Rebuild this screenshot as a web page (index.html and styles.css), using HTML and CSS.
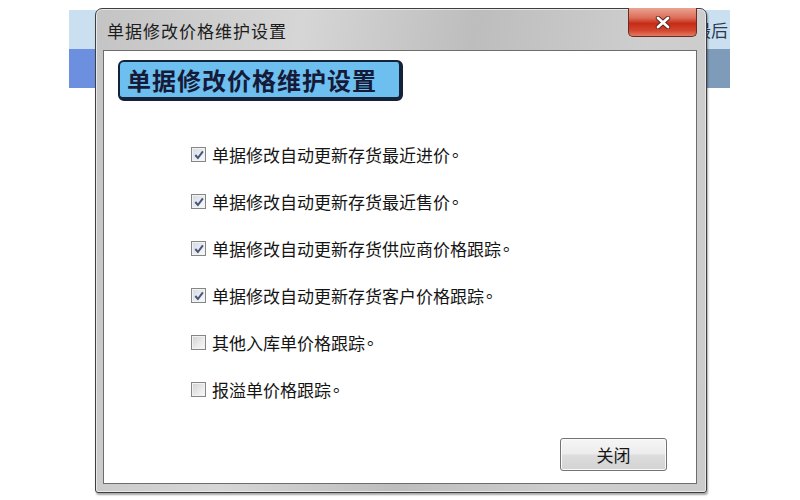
FILE: index.html
```html
<!DOCTYPE html>
<html lang="zh-CN">
<head>
<meta charset="utf-8">
<title>单据修改价格维护设置</title>
<link rel="stylesheet" href="styles.css">
</head>
<body>
<div class="desktop">
  <div class="appbar">
    <div class="app-top"><span class="app-text">最后</span></div>
    <div class="app-bottom"><div class="app-left"></div><div class="app-right"></div></div>
  </div>

  <div class="dialog">
    <div class="titlebar">单据修改价格维护设置</div>
    <div class="close-x">
      <svg width="16" height="13" viewBox="0 0 16 13">
        <path d="M3 2 L13 11 M13 2 L3 11" stroke="#5a2018" stroke-width="4.4" stroke-linecap="round"/>
        <path d="M3 2 L13 11 M13 2 L3 11" stroke="#ffffff" stroke-width="2.8" stroke-linecap="round"/>
      </svg>
    </div>
    <div class="client">
      <div class="banner">单据修改价格维护设置</div>
      <div class="options">
        <label class="opt"><span class="cb on"><svg width="12" height="12" viewBox="0 0 12 12"><path d="M2.3 6 L4.9 9 L9.9 2.3" fill="none" stroke="#46577a" stroke-width="2"/></svg></span><span class="opt-text">单据修改自动更新存货最近进价<span class="stop">。</span></span></label>
        <label class="opt"><span class="cb on"><svg width="12" height="12" viewBox="0 0 12 12"><path d="M2.3 6 L4.9 9 L9.9 2.3" fill="none" stroke="#46577a" stroke-width="2"/></svg></span><span class="opt-text">单据修改自动更新存货最近售价<span class="stop">。</span></span></label>
        <label class="opt"><span class="cb on"><svg width="12" height="12" viewBox="0 0 12 12"><path d="M2.3 6 L4.9 9 L9.9 2.3" fill="none" stroke="#46577a" stroke-width="2"/></svg></span><span class="opt-text">单据修改自动更新存货供应商价格跟踪<span class="stop">。</span></span></label>
        <label class="opt"><span class="cb on"><svg width="12" height="12" viewBox="0 0 12 12"><path d="M2.3 6 L4.9 9 L9.9 2.3" fill="none" stroke="#46577a" stroke-width="2"/></svg></span><span class="opt-text">单据修改自动更新存货客户价格跟踪<span class="stop">。</span></span></label>
        <label class="opt"><span class="cb"></span><span class="opt-text">其他入库单价格跟踪<span class="stop">。</span></span></label>
        <label class="opt"><span class="cb"></span><span class="opt-text">报溢单价格跟踪<span class="stop">。</span></span></label>
      </div>
      <div class="footer">
        <button class="btn">关闭</button>
      </div>
    </div>
  </div>
</div>
</body>
</html>
```

FILE: styles.css
```css
html, body {
  margin: 0;
  padding: 0;
  background: #ffffff;
}

body {
  width: 800px;
  height: 500px;
  overflow: hidden;
  font-family: "Noto Sans CJK SC", "Noto Sans", sans-serif;
}

.desktop {
  position: relative;
  width: 800px;
  height: 500px;
  background: #ffffff;
}

/* application window behind the dialog */
.appbar {
  position: absolute;
  left: 69px;
  top: 10px;
  width: 661px;
  height: 78px;
  display: flex;
  flex-direction: column;
}

.app-top {
  height: 39px;
  background: #cadff0;
  display: flex;
  justify-content: flex-end;
  align-items: center;
  overflow: hidden;
}

.app-text {
  font-size: 17px;
  color: #2c3a4e;
  margin-right: 2px;
}

.app-bottom {
  flex: 1;
  display: flex;
}

.app-left {
  flex: 1;
  background: #6d8fe0;
}

.app-right {
  flex: 1;
  background: #7e9cba;
}

/* dialog window */
.dialog {
  position: absolute;
  left: 95px;
  top: 8px;
  width: 610px;
  height: 483px;
  border: 1px solid #3e3e3e;
  border-radius: 7px 7px 3px 3px;
  background: linear-gradient(100deg, #c4c4c4 0%, #d6d6d6 30%, #bdbdbd 55%, #cecece 80%, #cbcbcb 100%);
  box-shadow: 1px 2px 2px rgba(0, 0, 0, 0.35), inset 0 0 0 1px #e8e8e8;
  display: flex;
  flex-direction: column;
}

.titlebar {
  height: 41px;
  display: flex;
  align-items: center;
  padding-left: 11px;
  font-size: 17px;
  letter-spacing: 1px;
  color: #1c1c1c;
  box-sizing: border-box;
  padding-top: 1px;
}

.close-x {
  position: absolute;
  top: -1px;
  right: 9px;
  width: 69px;
  height: 29px;
  box-sizing: border-box;
  border: 1px solid #6b2a22;
  border-top: none;
  border-radius: 0 0 5px 5px;
  background: linear-gradient(180deg, #eba392 0%, #dc6e5a 35%, #c62c18 55%, #d2452e 80%, #e47a64 100%);
  display: flex;
  align-items: center;
  justify-content: center;
}

.client {
  flex: 1;
  margin: 0 9px 8px 7px;
  border: 1px solid #6d6d6d;
  background: #ffffff;
  display: flex;
  flex-direction: column;
}

.banner {
  margin: 9px 0 0 14px;
  width: 285px;
  height: 41px;
  box-sizing: border-box;
  border: 2px solid #14233a;
  border-right-width: 4px;
  border-bottom-width: 4px;
  border-radius: 6px;
  background: #6dbff0;
  color: #151a38;
  font-size: 24px;
  font-weight: bold;
  letter-spacing: 1px;
  padding-left: 7px;
  display: flex;
  align-items: center;
  white-space: nowrap;
}

.options {
  margin-top: 30px;
  padding-left: 87px;
  display: flex;
  flex-direction: column;
}

.opt {
  height: 47px;
  display: flex;
  align-items: center;
}

.cb {
  width: 15px;
  height: 15px;
  box-sizing: border-box;
  border: 1px solid #868686;
  background: linear-gradient(135deg, #d0d0d0 0%, #ebebeb 60%, #f8f8f8 100%);
  box-shadow: inset 0 0 0 1px #f2f2f2;
  display: flex;
  align-items: center;
  justify-content: center;
  flex: none;
}

.cb.on {
  background: linear-gradient(135deg, #d4d8e2 0%, #eceef3 60%, #fafafa 100%);
}

.opt-text {
  margin-left: 6px;
  font-size: 17px;
  line-height: 24px;
  color: #141414;
  white-space: nowrap;
}

.stop {
  line-height: 0;
  vertical-align: 5px;
  margin-left: 2px;
}

.footer {
  margin-top: auto;
  display: flex;
  justify-content: flex-end;
  padding: 0 29px 12px 0;
}

.btn {
  width: 107px;
  height: 33px;
  border: 1px solid #737373;
  border-radius: 3px;
  background: linear-gradient(180deg, #f6f6f6 0%, #ececec 48%, #dddddd 52%, #d3d3d3 100%);
  box-shadow: inset 0 0 0 1px #fbfbfb;
  font-family: "Noto Sans CJK SC", "Noto Sans", sans-serif;
  font-size: 17px;
  color: #161616;
  padding: 0;
}
```
